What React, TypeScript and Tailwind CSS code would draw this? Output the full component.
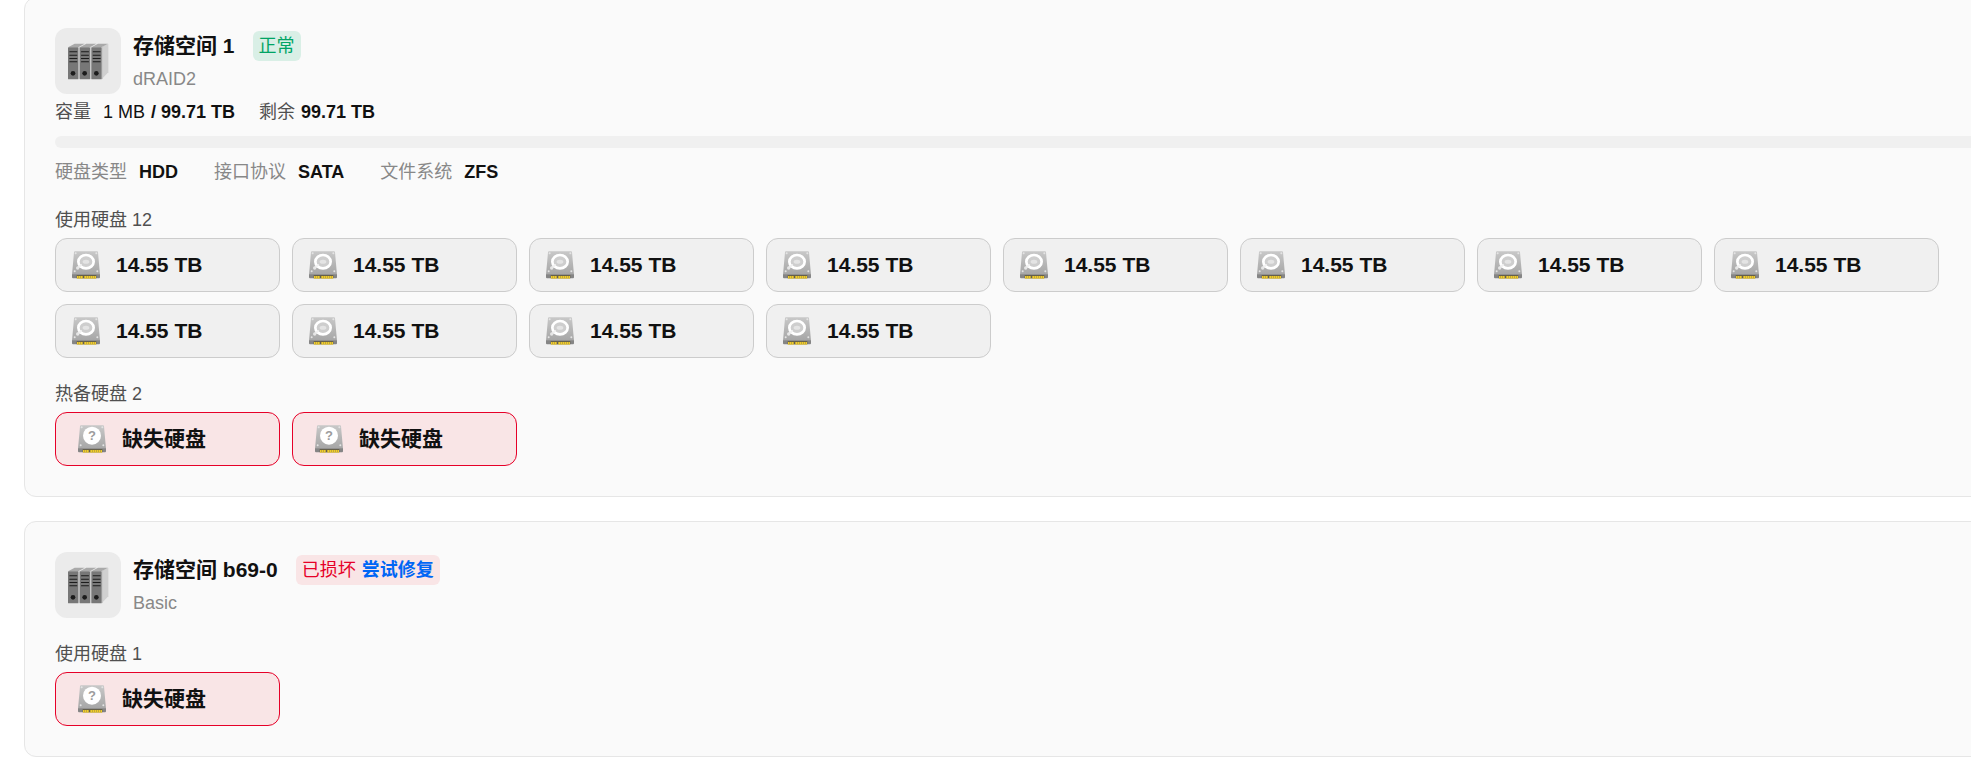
import clsx from "clsx";

type Drive = { size?: string; missing?: boolean };

type DriveGroup = { label: string; drives: Drive[] };

const usedDrives: Drive[] = Array.from({ length: 12 }, () => ({ size: "14.55 TB" }));

function ServerIcon() {
  return (
    <svg className="h-[37px] w-[41px]" viewBox="0 0 123 111" aria-hidden="true">
      <path d="M101 12 L121 2 V88 L101 109 Z" fill="#d0d0d0" />
      {[0, 35, 70].map((x) => (
        <g key={x} transform={`translate(${x} 0)`}>
          <path d="M0 13 L20 2 H50 L31 13 Z" fill="#a9a9a9" />
          <path d="M31 13 L35 10 V107 L31 109 Z" fill="#c8c8c8" />
          <rect x="0" y="13" width="31" height="96" rx="2" fill="#777777" />
          {[25, 35, 45, 55].map((y) => (
            <rect key={y} x="4" y={y} width="24" height="3" rx="1" fill="#1c1c1c" />
          ))}
          <circle cx="15" cy="91" r="7" fill="#1c1c1c" />
        </g>
      ))}
    </svg>
  );
}

function DriveIcon({ missing }: { missing?: boolean }) {
  return (
    <svg className="h-7 w-7 shrink-0" viewBox="0 0 84 84" aria-hidden="true">
      <defs>
        <linearGradient id="drive-body" x1="0" y1="0" x2="0" y2="1">
          <stop offset="0" stopColor="#c8c8c8" />
          <stop offset="1" stopColor="#a6a6a6" />
        </linearGradient>
      </defs>
      <path d="M9 1 H75 Q78 1 78 4 L84 71 H0 L6 4 Q6 1 9 1 Z" fill="url(#drive-body)" />
      <path d="M0 70 H84 V79 Q84 82 81 82 H3 Q0 82 0 79 Z" fill="#858585" />
      <rect x="14" y="72" width="59" height="10" fill="#66604a" />
      {[15, 21, 27, 37, 43, 49, 55, 61, 67].map((x) => (
        <rect key={x} x={x} y="75" width="5" height="8" fill="#f0cc2c" />
      ))}
      {[[11, 7], [73, 7], [8, 61], [76, 61]].map(([cx, cy]) => (
        <circle key={`${cx}-${cy}`} cx={cx} cy={cy} r="3" fill="#e4e4e4" />
      ))}
      {missing ? (
        <>
          <circle cx="42" cy="32" r="27" fill="#ffffff" />
          <text x="42" y="46" textAnchor="middle" fontSize="39" fontWeight="700" fill="#9c9c9c">
            ?
          </text>
        </>
      ) : (
        <>
          <ellipse cx="42" cy="32" rx="23" ry="20" fill="#cecece" stroke="#ffffff" strokeWidth="8" />
          <ellipse cx="42" cy="32" rx="10" ry="6" fill="#e4e4e4" />
          <path d="M18 50 L27 42" stroke="#f2f2f2" strokeWidth="6" strokeLinecap="round" />
          <circle cx="17" cy="51" r="5" fill="#e6e6e6" />
        </>
      )}
    </svg>
  );
}

function DriveTile({ size, missing }: Drive) {
  return (
    <li
      className={clsx(
        "flex h-[54px] w-[225px] items-center gap-4 rounded-xl border text-[21px] font-bold text-[#111111]",
        missing ? "border-[#e60028] bg-[#f9e5e6] px-[22px]" : "border-[#cccccc] bg-[#f0f0f0] px-4"
      )}
    >
      <DriveIcon missing={missing} />
      <span>{missing ? "缺失硬盘" : size}</span>
    </li>
  );
}

function Meta({ label, value }: { label: string; value: string }) {
  return (
    <div className="flex gap-3">
      <dt className="text-[#888888]">{label}</dt>
      <dd className="font-bold text-[#111111]">{value}</dd>
    </div>
  );
}

function StorageCard({
  name,
  type,
  status,
  groups,
  children,
}: {
  name: string;
  type: string;
  status: React.ReactNode;
  groups: DriveGroup[];
  children?: React.ReactNode;
}) {
  return (
    <section className="rounded-xl border border-[#e6e6e6] bg-[#fafafa] p-[30px]">
      <header className="flex gap-3">
        <div className="flex h-[66px] w-[66px] items-center justify-center rounded-xl bg-[#ebebeb]">
          <ServerIcon />
        </div>
        <div className="flex flex-col justify-center gap-1.5">
          <div className="flex items-center gap-[18px]">
            <h2 className="text-[21px] leading-[30px] font-bold text-[#111111]">{name}</h2>
            {status}
          </div>
          <p className="text-[#888888]">{type}</p>
        </div>
      </header>
      {children}
      {groups.map((group) => (
        <div key={group.label} className="mt-6">
          <h3 className="mb-1.5 text-[#505050]">
            {group.label} {group.drives.length}
          </h3>
          <ul className="flex flex-wrap gap-3">
            {group.drives.map((drive, i) => (
              <DriveTile key={i} {...drive} />
            ))}
          </ul>
        </div>
      ))}
    </section>
  );
}

export default function App() {
  return (
    <div className="overflow-hidden bg-white font-['Liberation_Sans','Noto_Sans_CJK_SC',sans-serif] text-[18px] leading-6">
      {/* cards run past the right edge of the window */}
      <main className="-mt-[3px] -mr-12 flex flex-col gap-6 pb-6 pl-6">
        <StorageCard
          name="存储空间 1"
          type="dRAID2"
          status={
            <span className="rounded-md bg-[#d9efe6] px-1.5 leading-[30px] text-[#00a464]">正常</span>
          }
          groups={[
            { label: "使用硬盘", drives: usedDrives },
            { label: "热备硬盘", drives: [{ missing: true }, { missing: true }] },
          ]}
        >
          <div className="mt-1.5 flex gap-6 text-[#505050]">
            <div className="flex gap-3">
              <span>容量</span>
              <p className="flex gap-1.5 text-[#111111]">
                1 MB <b className="font-bold">/ 99.71 TB</b>
              </p>
            </div>
            <p className="flex gap-1.5">
              剩余 <b className="font-bold text-[#111111]">99.71 TB</b>
            </p>
          </div>
          <div className="my-3 h-3 rounded-md bg-[#f0f0f0]" />
          <dl className="flex gap-9">
            <Meta label="硬盘类型" value="HDD" />
            <Meta label="接口协议" value="SATA" />
            <Meta label="文件系统" value="ZFS" />
          </dl>
        </StorageCard>

        <StorageCard
          name="存储空间 b69-0"
          type="Basic"
          status={
            <span className="flex gap-1.5 rounded-md bg-[#f9e5e6] px-1.5 leading-[30px] text-[#e60028]">
              已损坏
              <button type="button" className="cursor-pointer font-bold text-[#0066f5]">
                尝试修复
              </button>
            </span>
          }
          groups={[{ label: "使用硬盘", drives: [{ missing: true }] }]}
        />
      </main>
    </div>
  );
}
